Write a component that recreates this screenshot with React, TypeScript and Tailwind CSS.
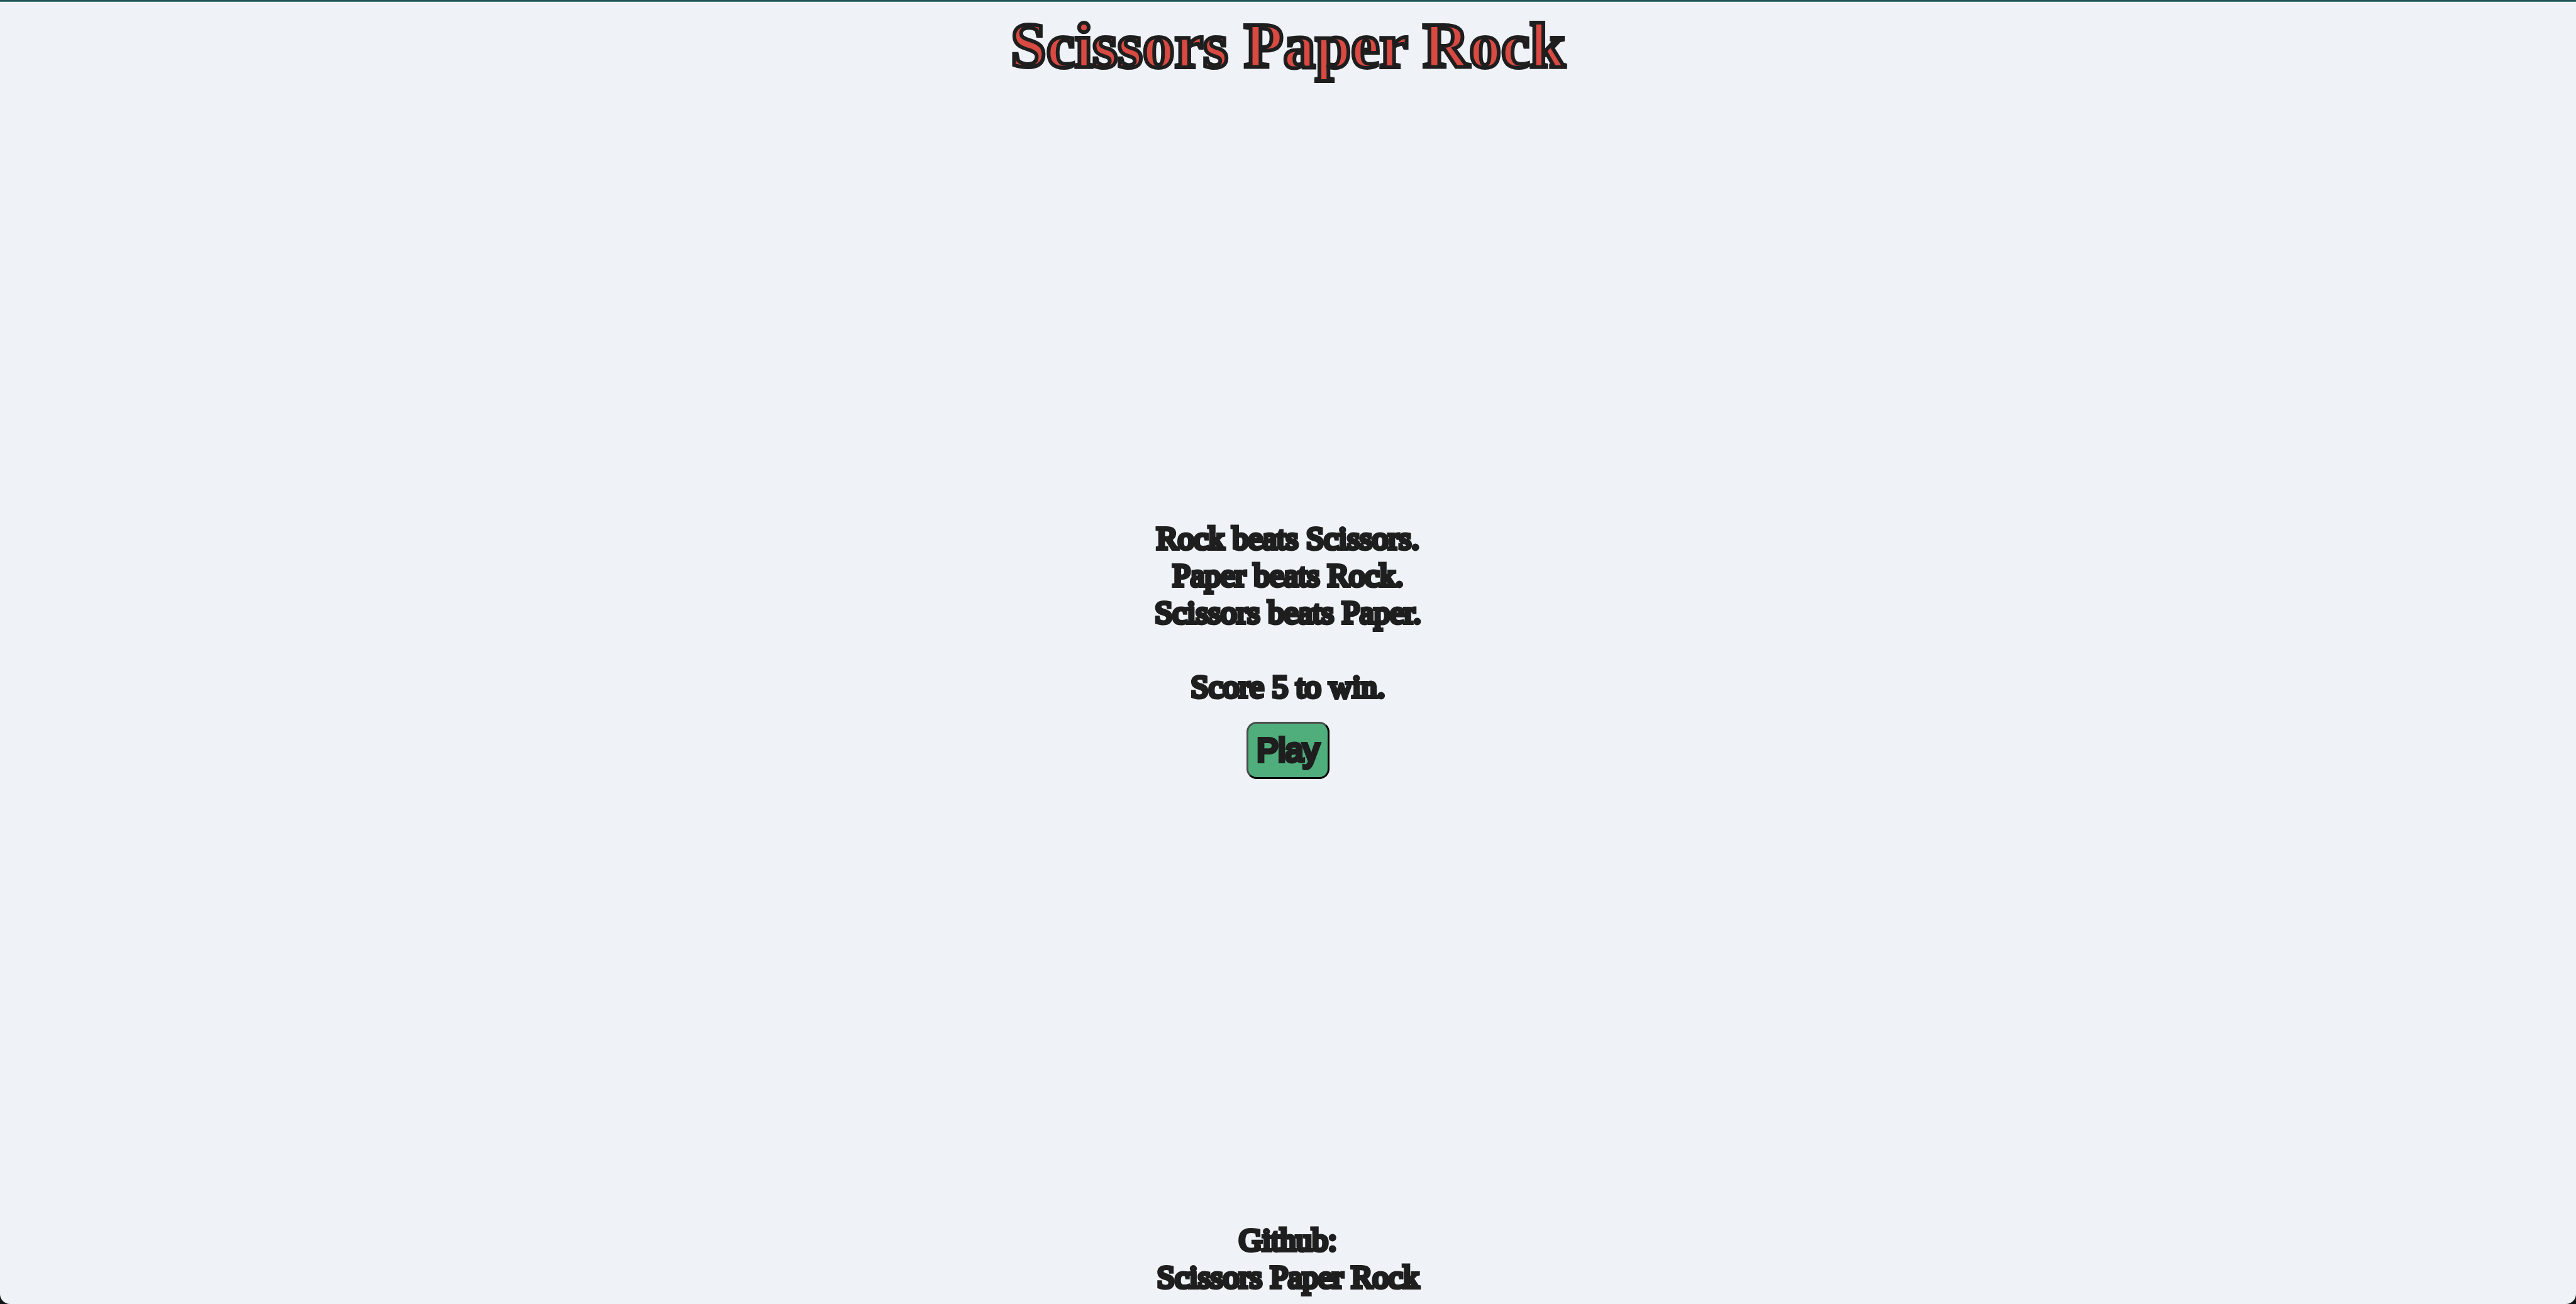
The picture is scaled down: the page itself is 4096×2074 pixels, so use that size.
const strokeText = "[-webkit-text-stroke:6px_#1e1e1e]";

export default function App() {
  return (
    <div className="h-screen bg-[#111713]">
      <div
        className={`flex h-full flex-col items-center overflow-hidden rounded-b-[16px] bg-[#eff3f8] pb-[13px] text-center font-['Liberation_Serif',serif] text-[51px] leading-[59px] text-[#eff3f8] ${strokeText}`}
      >
        <div className="h-[3px] w-full shrink-0 border-b border-[#477a80] bg-[#255259]" />
        <h1 className="mt-[11px] mb-1 text-[102px] leading-[118px] font-bold text-[#d84a42]">
          Scissors Paper Rock
        </h1>
        <main className="flex grow flex-col items-center justify-center">
          <p>
            Rock beats Scissors.
            <br />
            Paper beats Rock.
            <br />
            Scissors beats Paper.
            <br />
            <br />
            Score 5 to win.
          </p>
          <button
            type="button"
            className="mt-[26px] mb-[13px] rounded-[16px] border-[3px] border-t-[#4c4c4c] border-r-black border-b-black border-l-[#4c4c4c] bg-[#4fae7b] p-[13px] font-['Liberation_Sans',sans-serif]"
          >
            Play
          </button>
        </main>
        <footer>
          <p>Github:</p>
          <a href="#github" className="block text-[#2c5fd0]">
            Scissors Paper Rock
          </a>
        </footer>
      </div>
    </div>
  );
}
